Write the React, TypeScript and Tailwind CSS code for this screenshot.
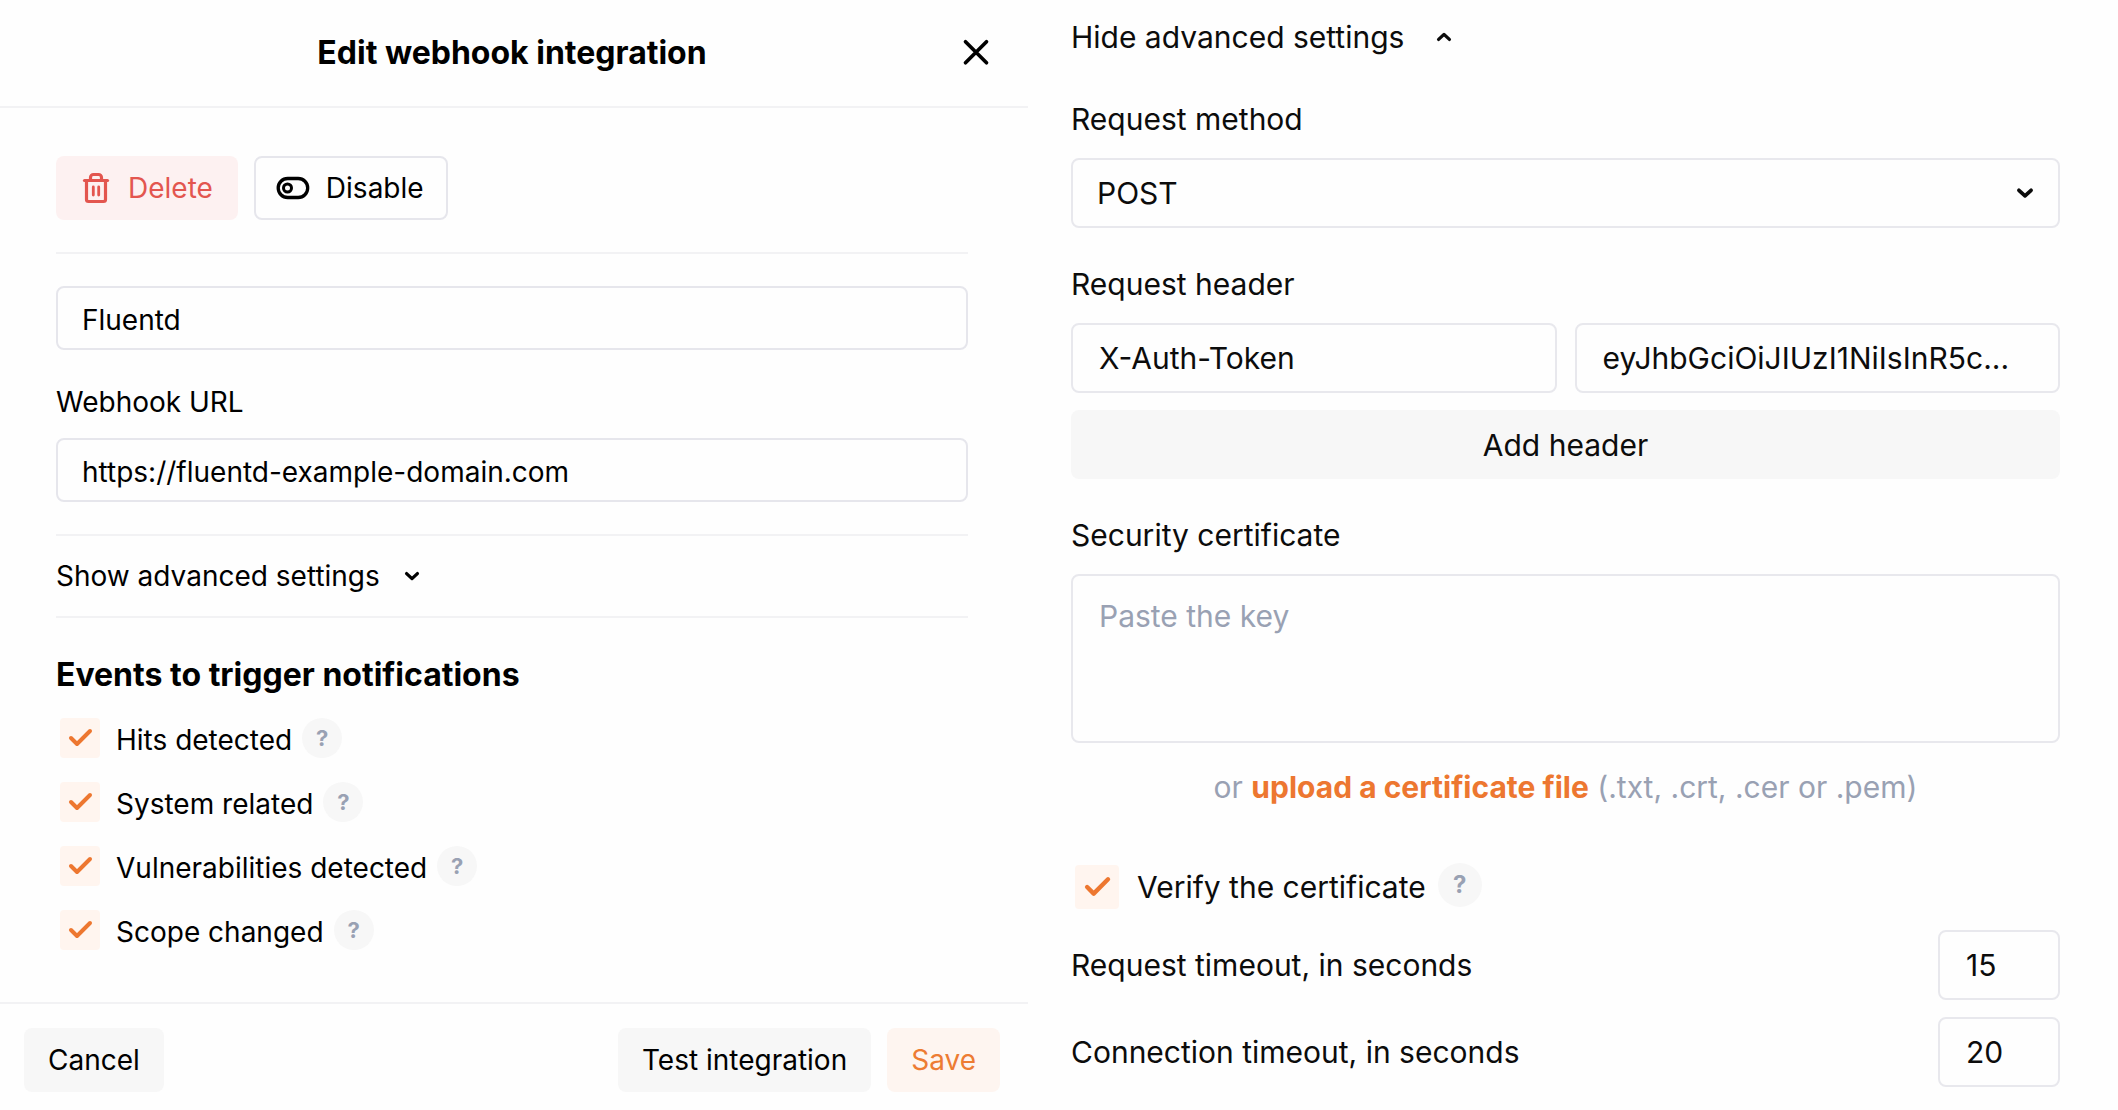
import { useState } from "react";
import type { ReactNode } from "react";

const LEFT_INPUT =
  "block h-16 w-full rounded-lg border-2 border-[#e6e6ec] bg-transparent px-6 pt-1 text-[28px] leading-10 outline-none";
const RIGHT_INPUT =
  "block h-[70px] w-full min-w-0 rounded-lg border-2 border-[#e8e8ed] bg-transparent px-[26px] text-[30px] leading-10 outline-none";

function Chevron({ up = false, className = "" }: { up?: boolean; className?: string }) {
  return (
    <svg viewBox="0 0 16 12" fill="none" stroke="currentColor" strokeWidth="3.300" strokeLinecap="round" strokeLinejoin="round" className={className} aria-hidden="true">
      <path d={up ? "M2.600 8.400 8 3.400l5.400 5" : "M2.600 3.600 8 8.600l5.400-5"} />
    </svg>
  );
}

function TrashIcon() {
  return (
    <svg width="28" height="32" viewBox="0 0 28 32" fill="none" stroke="currentColor" strokeWidth="3.2" strokeLinecap="round" strokeLinejoin="round" aria-hidden="true">
      <path d="M2.500 8.500h23" />
      <path d="M8.500 8V5.500a3 3 0 0 1 3-3h5a3 3 0 0 1 3 3V8" />
      <path d="M4.500 8.500v19a2 2 0 0 0 2 2h15a2 2 0 0 0 2-2v-19" />
      <path d="M11.300 15v8M16.700 15v8" strokeWidth="2.800" />
    </svg>
  );
}

function ToggleIcon() {
  return (
    <svg width="34" height="24" viewBox="0 0 34 24" fill="none" stroke="currentColor" strokeWidth="3.300" aria-hidden="true">
      <rect x="2.200" y="2.500" width="29.500" height="19" rx="9.500" />
      <circle cx="11.500" cy="12" r="4" strokeWidth="3" />
    </svg>
  );
}

function CheckBox({ id, className }: { id: string; className: string }) {
  const [checked, setChecked] = useState(true);
  return (
    <span className={`relative shrink-0 ${className}`}>
      <input
        id={id}
        type="checkbox"
        checked={checked}
        onChange={(e) => setChecked(e.target.checked)}
        className="block size-full appearance-none rounded bg-[#fff5ef]"
      />
      {checked && (
        <svg viewBox="0 0 40 40" fill="none" stroke="#ed7730" strokeWidth="4" strokeLinecap="round" strokeLinejoin="round" className="pointer-events-none absolute inset-0 size-full" aria-hidden="true">
          <path d="m11 20 6 6 13-13" />
        </svg>
      )}
    </span>
  );
}

function Help({ topic, className }: { topic: string; className: string }) {
  return (
    <button type="button" aria-label={`About: ${topic}`} className={`flex shrink-0 items-center justify-center rounded-full bg-[#f7f7f7] font-bold text-[#99a1b3] ${className}`}>
      ?
    </button>
  );
}

function Divider() {
  return <hr className="border-t-2 border-[#f2f2f4]" />;
}

function FooterButton({ children, className = "bg-[#f7f7f7]" }: { children: ReactNode; className?: string }) {
  return (
    <button type="button" className={`h-16 rounded-lg px-6 text-[28px] leading-10 ${className}`}>
      {children}
    </button>
  );
}

const EVENTS = [
  { id: "hits", label: "Hits detected" },
  { id: "system", label: "System related" },
  { id: "vulnerabilities", label: "Vulnerabilities detected" },
  { id: "scope", label: "Scope changed" },
];

function EditPanel() {
  return (
    <form className="flex flex-col text-[28px] leading-10" onSubmit={(e) => e.preventDefault()}>
      <header className="grid h-[108px] grid-cols-[1fr_auto_1fr] items-center border-b-2 border-[#f2f2f4] pr-9 pl-8">
        <h1 className="col-start-2 text-[32px] font-bold">Edit webhook integration</h1>
        <button type="button" aria-label="Close" className="justify-self-end">
          <svg width="32" height="32" viewBox="0 0 32 32" fill="none" stroke="currentColor" strokeWidth="3.700" strokeLinecap="round" aria-hidden="true">
            <path d="m5.500 4.700 21 21M26.500 4.700l-21 21" />
          </svg>
        </button>
      </header>

      <div className="pt-12 pr-[60px] pb-[52px] pl-14">
        <div className="flex gap-4 pb-8">
          <button type="button" className="flex h-16 items-center gap-[18px] rounded-lg bg-[#fdf1f1] pr-[25px] pl-[26px] text-[#e3564f]">
            <TrashIcon />
            Delete
          </button>
          <button type="button" className="flex h-16 items-center gap-4 rounded-lg border-2 border-[#e6e6ec] pr-[22px] pl-5">
            <ToggleIcon />
            Disable
          </button>
        </div>
        <Divider />
        <input aria-label="Integration name" defaultValue="Fluentd" className={`${LEFT_INPUT} mt-8`} />
        <label htmlFor="webhook-url" className="mt-8 mb-4 block">Webhook URL</label>
        <input id="webhook-url" type="url" defaultValue="https://fluentd-example-domain.com" className={`${LEFT_INPUT} mb-8`} />
        <Divider />
        <button type="button" className="flex h-20 items-center gap-6">
          Show advanced settings
          <Chevron className="h-3 w-4" />
        </button>
        <Divider />
        <h2 className="mt-[37px] text-[32px] leading-10 font-bold">Events to trigger notifications</h2>
        <ul className="mt-[23px] flex flex-col gap-6 pl-1">
          {EVENTS.map(({ id, label }) => (
            <li key={id} className="flex h-10 items-center">
              <CheckBox id={id} className="size-10" />
              <label htmlFor={id} className="pt-1 pr-2.5 pl-4">{label}</label>
              <Help topic={label} className="size-10 text-[22px]" />
            </li>
          ))}
        </ul>
      </div>

      <footer className="flex gap-4 border-t-2 border-[#f2f2f4] pt-6 pr-7 pb-[18px] pl-6">
        <FooterButton>Cancel</FooterButton>
        <span className="flex-1" />
        <FooterButton>Test integration</FooterButton>
        <FooterButton className="bg-[#fef5f0] text-[#ed7c33]">Save</FooterButton>
      </footer>
    </form>
  );
}

function AdvancedPanel() {
  return (
    <form className="flex flex-col pr-[58px] pl-[43px] text-[30px] leading-10 text-[#0c0c0c]" onSubmit={(e) => e.preventDefault()}>
      <button type="button" className="mt-[17px] flex items-center gap-8 self-start">
        Hide advanced settings
        <Chevron up className="h-3 w-4" />
      </button>

      <label htmlFor="method" className="mt-[42px] mb-[19px]">Request method</label>
      <div className="relative">
        <select id="method" defaultValue="POST" className="block h-[70px] w-full appearance-none rounded-lg border-2 border-[#e8e8ed] bg-transparent px-6 text-[30px] leading-10 outline-none">
          <option>POST</option>
          <option>PUT</option>
        </select>
        <Chevron className="pointer-events-none absolute top-7 right-[26px] h-3.5 w-[18px]" />
      </div>

      <fieldset className="mt-9">
        <legend className="mb-[19px]">Request header</legend>
        <div className="grid grid-cols-2 gap-[18px]">
          <input aria-label="Header name" defaultValue="X-Auth-Token" className={RIGHT_INPUT} />
          <input aria-label="Header value" defaultValue="eyJhbGciOiJIUzI1NiIsInR5c..." className={RIGHT_INPUT} />
        </div>
      </fieldset>
      <button type="button" className="mt-[17px] h-[69px] rounded-lg bg-[#f7f7f7]">Add header</button>

      <label htmlFor="certificate" className="mt-9 mb-[19px]">Security certificate</label>
      <textarea id="certificate" placeholder="Paste the key" className="block h-[169px] w-full resize-none rounded-lg border-2 border-[#e8e8ed] bg-transparent px-[26px] py-5 outline-none placeholder:text-[#99a1b3]" />
      <p className="mt-6 text-center text-[#99a1b3]">
        or <a href="#upload" className="font-bold text-[#ed7730]">upload a certificate file</a> (.txt, .crt, .cer or .pem)
      </p>

      <div className="mt-[58px] flex h-11 items-center pl-1">
        <CheckBox id="verify" className="size-11" />
        <label htmlFor="verify" className="pr-3 pl-[18px]">Verify the certificate</label>
        <Help topic="Verify the certificate" className="mb-1 size-11 text-2xl" />
      </div>

      <div className="mt-[21px] flex items-center justify-between">
        <label htmlFor="request-timeout">Request timeout, in seconds</label>
        <div className="w-[122px]">
          <input id="request-timeout" inputMode="numeric" defaultValue="15" className={RIGHT_INPUT} />
        </div>
      </div>
      <div className="mt-[17px] flex items-center justify-between">
        <label htmlFor="connection-timeout">Connection timeout, in seconds</label>
        <div className="w-[122px]">
          <input id="connection-timeout" inputMode="numeric" defaultValue="20" className={RIGHT_INPUT} />
        </div>
      </div>
    </form>
  );
}

export default function App() {
  return (
    <main className="grid min-h-screen grid-cols-[1028fr_1090fr] items-start bg-[#fefefe] font-['Inter',sans-serif] text-black">
      <EditPanel />
      <AdvancedPanel />
    </main>
  );
}
